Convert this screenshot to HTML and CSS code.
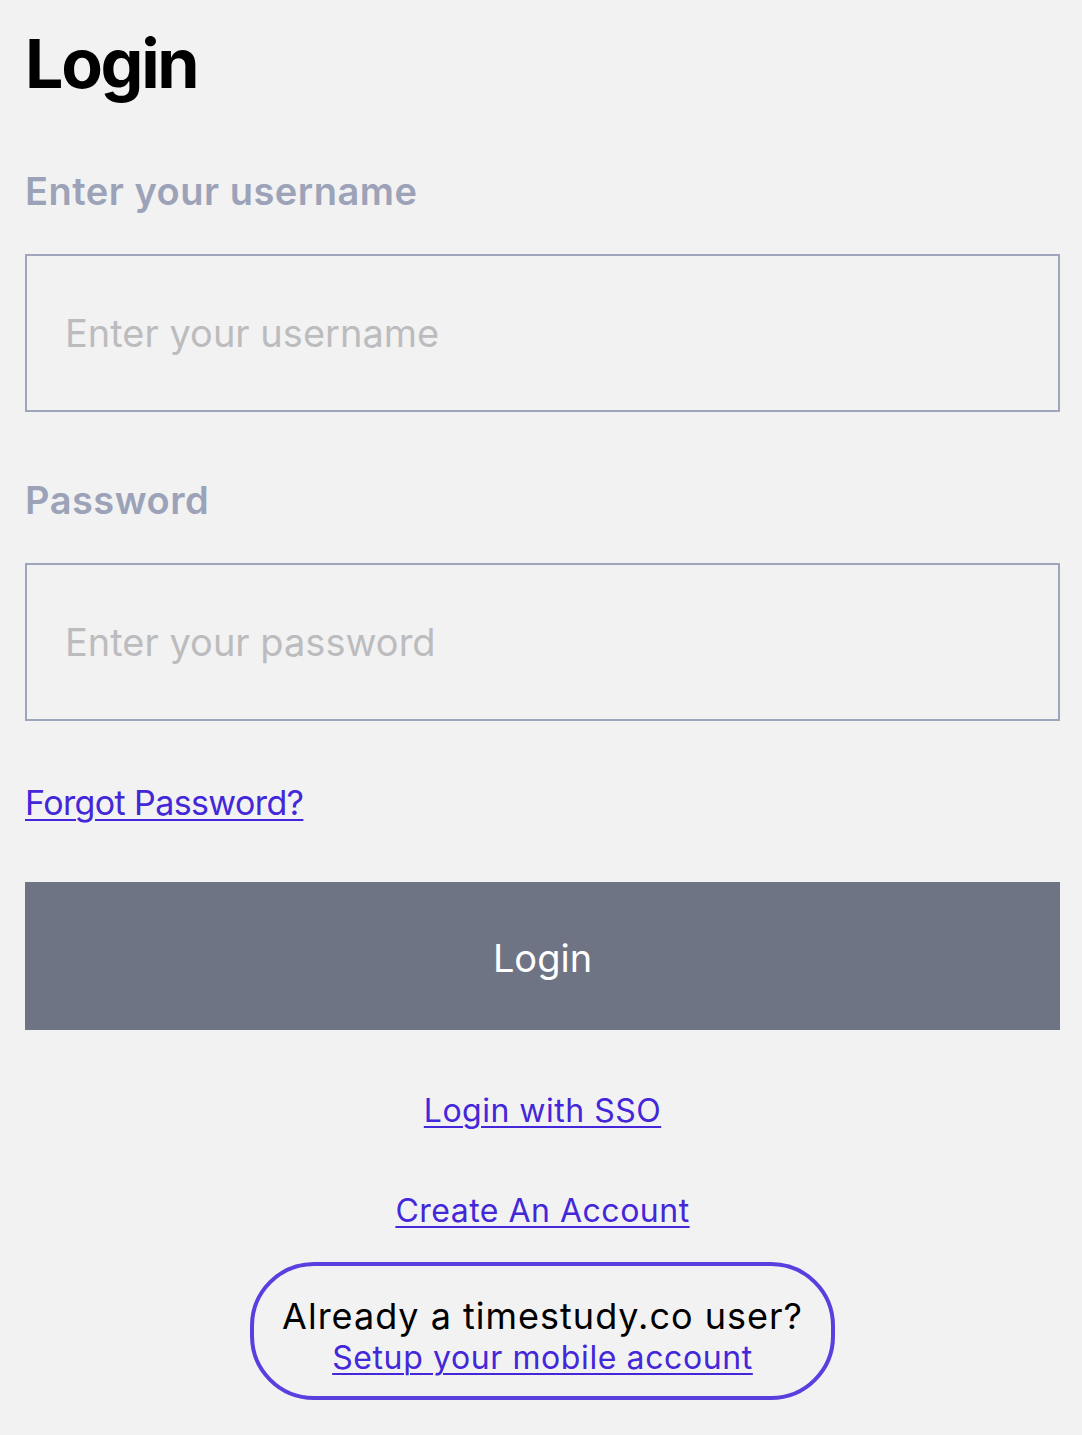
FILE: index.html
```html
<!DOCTYPE html>
<html lang="en">
<head>
<meta charset="utf-8">
<title>Login</title>
<link rel="stylesheet" href="styles.css">
</head>
<body>
<main class="page">
  <h1 class="title">Login</h1>
  <label class="label label-user" for="username">Enter your username</label>
  <input class="field" id="username" type="text" placeholder="Enter your username">
  <label class="label label-pass" for="password">Password</label>
  <input class="field" id="password" type="password" placeholder="Enter your password">
  <a class="link forgot" href="#">Forgot Password?</a>
  <button class="btn" type="button">Login</button>
  <div class="center">
    <a class="link sso" href="#">Login with SSO</a>
    <a class="link create" href="#">Create An Account</a>
    <div class="mobile-box">
      <p class="mobile-q">Already a timestudy.co user?</p>
      <a class="link mobile-link" href="#">Setup your mobile account</a>
    </div>
  </div>
</main>
</body>
</html>
```
FILE: styles.css
```css
html, body {
  margin: 0;
  padding: 0;
  background: #f2f2f2;
}
body {
  font-family: Inter, "Noto Sans", "Liberation Sans", sans-serif;
  color: #000;
}
.page {
  display: flex;
  flex-direction: column;
  align-items: stretch;
  padding: 0 22px 0 25px;
}
.title {
  margin: 29px 0 0 0;
  font-size: 68px;
  line-height: 68px;
  font-weight: 700;
  letter-spacing: -2.3px;
}
.label {
  display: block;
  font-size: 38px;
  line-height: 38px;
  font-weight: 600;
  color: #9ca3b8;
  letter-spacing: 0.5px;
}
.label-user { margin-top: 75px; }
.label-pass { margin-top: 69px; }
.field {
  display: block;
  box-sizing: border-box;
  margin: 44px 0 0 0;
  height: 158px;
  width: 100%;
  border: 2px solid #9fa6bc;
  border-radius: 0;
  background: transparent;
  padding: 0 0 0 38px;
  font-family: inherit;
  font-size: 38px;
  line-height: 38px;
  color: #000;
  outline: none;
}
.field::placeholder {
  color: #bcbcbf;
  opacity: 1;
}
.link {
  color: #4327d8;
  text-decoration: underline;
  text-decoration-thickness: 2px;
  text-underline-offset: 4px;
}
.forgot {
  align-self: flex-start;
  margin-top: 65px;
  font-size: 34px;
  line-height: 34px;
  letter-spacing: -0.6px;
}
.btn {
  margin-top: 62px;
  height: 148px;
  border: none;
  border-radius: 0;
  background: #6e7484;
  color: #fff;
  font-family: inherit;
  font-size: 38px;
  line-height: 38px;
  font-weight: 400;
  padding: 4px 0 0 0;
}
.center {
  display: flex;
  flex-direction: column;
  align-items: center;
}
.sso {
  margin-top: 65px;
  font-size: 32px;
  line-height: 32px;
  letter-spacing: 0.5px;
}
.create {
  margin-top: 68px;
  font-size: 32px;
  line-height: 32px;
  letter-spacing: 0.5px;
}
.mobile-box {
  margin-top: 35px;
  display: flex;
  flex-direction: column;
  align-items: center;
  border: 4px solid #5a3fdf;
  border-radius: 64px;
  padding: 32px 28px 22px;
}
.mobile-q {
  margin: 0;
  font-size: 36px;
  line-height: 36px;
  letter-spacing: 1px;
}
.mobile-link {
  margin-top: 8px;
  font-size: 32px;
  line-height: 32px;
  letter-spacing: 0.6px;
}
```
